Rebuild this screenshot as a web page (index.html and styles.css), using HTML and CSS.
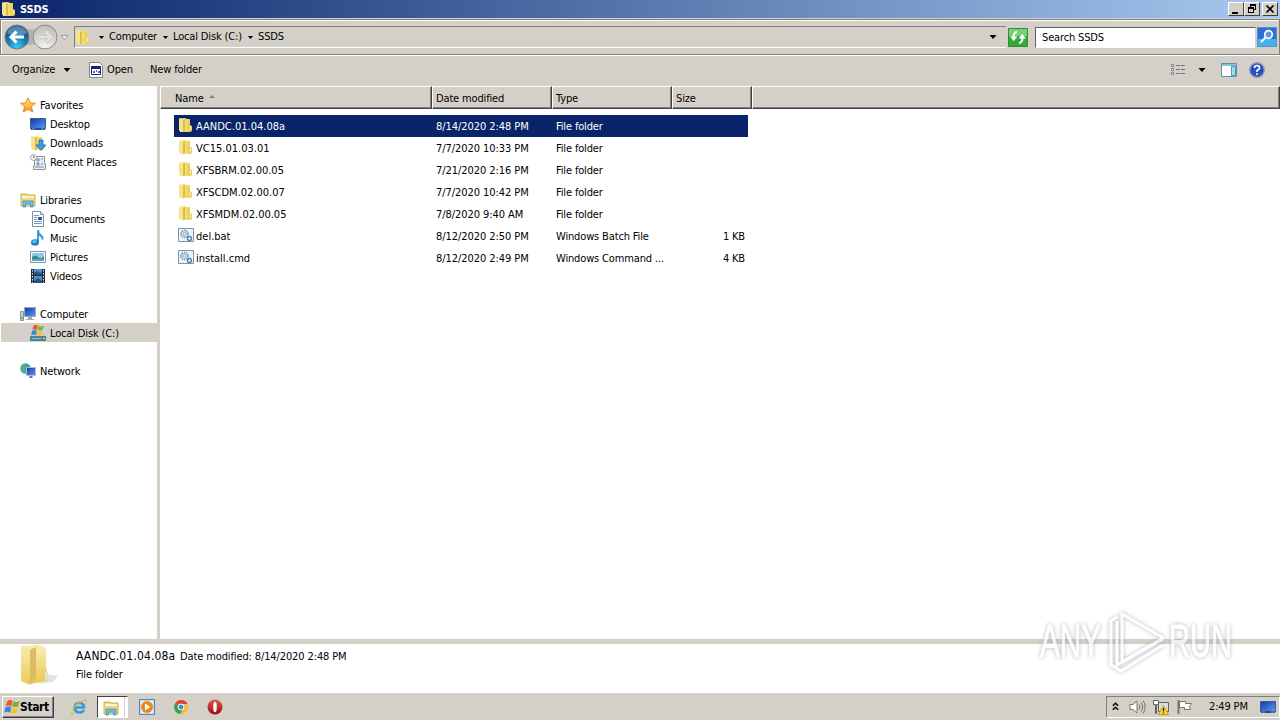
FILE: index.html
```html
<!DOCTYPE html>
<html lang="en">
<head>
    <meta charset="UTF-8">
    <meta name="viewport" content="width=device-width, initial-scale=1.0">
    <title>SSDS</title>
    <link rel="stylesheet" href="styles.css">
</head>
<body>
    <!-- shared icons -->
    <svg class="defs" width="0" height="0">
        <defs>
            <linearGradient id="gold" x1="0" x2="1"><stop offset="0" stop-color="#fbf0a0"/><stop offset="1" stop-color="#e6ca54"/></linearGradient>
            <linearGradient id="goldDown" x1="0" y1="0" x2="0" y2="1"><stop offset="0" stop-color="#f8ecac"/><stop offset="1" stop-color="#ecca58"/></linearGradient>
            <linearGradient id="screen" x1="0" y1="0" x2="1" y2="1"><stop offset="0" stop-color="#1636a8"/><stop offset="1" stop-color="#5a9cf0"/></linearGradient>
            <radialGradient id="blueBall" cx=".5" cy=".9" r=".85"><stop offset="0" stop-color="#3fc8ef"/><stop offset=".5" stop-color="#1878b4"/><stop offset="1" stop-color="#134978"/></radialGradient>
            <radialGradient id="greyBall" cx=".5" cy=".9" r=".9"><stop offset="0" stop-color="#f4f3f1"/><stop offset="1" stop-color="#bdbab5"/></radialGradient>
            <linearGradient id="starFill" x1="0" y1="0" x2="0" y2="1"><stop offset="0" stop-color="#fff07a"/><stop offset="1" stop-color="#f8961e"/></linearGradient>
            <linearGradient id="redBall" x1="0" y1="0" x2="0" y2="1"><stop offset="0" stop-color="#e8584a"/><stop offset="1" stop-color="#9c0810"/></linearGradient>
        </defs>
        <symbol id="folder" viewBox="1 0 16 16">
            <path d="M2 1.500l6-.5 2 1h3v6l2 1v5l-2 1H3z" fill="url(#gold)"/>
            <path d="M2 1.500l4 1.500v12l-4-1.500z" fill="#f6e48c"/>
            <path d="M6 3l2-1v12l-2 1.500z" fill="#dcbc48"/>
            <path d="M8 2h2v12H8z" fill="#f4dd70"/>
            <path d="M10.500 2H13v11h-2.500z" fill="#ecd25c"/>
            <path d="M13 9.500h1v3h-1z" fill="#fff8d0"/>
        </symbol>
        <symbol id="library" viewBox="0 0 16 16">
            <path d="M1 2h6l1 1h7v11H1z" fill="#f0d878" stroke="#cfb050"/>
            <path d="M2 5h12" stroke="#fff7c4" stroke-width="2"/>
            <path d="M3 15V9h10v6h-2.500v-3h-5v3z" fill="#6cc0e8" stroke="#3c90bc" stroke-width=".8"/>
        </symbol>
        <symbol id="script" viewBox="0 0 16 16">
            <path d="M.5 1.500h15v13H.5z" fill="#edf4f9" stroke="#7d93a6"/>
            <circle cx="6.500" cy="7" r="3.500" fill="none" stroke="#668fae" stroke-width="1.500" stroke-dasharray="1.500 .7"/>
            <circle cx="6.500" cy="7" r="1.500" fill="none" stroke="#7fa2bd"/>
            <circle cx="11.500" cy="11.500" r="2" fill="#fff" stroke="#4f7ca0" stroke-width="1.300"/>
        </symbol>
        <symbol id="flag" viewBox="1 0 15 15">
            <path d="M4 2q3-2 5 0L8 7Q5 5 2.500 7z" fill="#ee5a24"/>
            <path d="M9.800 2.400q3 1 6-.5l-1.500 5q-3 1-5.500 0z" fill="#74b62c"/>
            <path d="M2.300 8q3-2 5.500 0l-1.200 5q-3-2-5.500 0z" fill="#3787dc"/>
            <path d="M8.600 8.200q3 1 5.500 0l-1.400 5q-3 1-5.300 0z" fill="#f8c424"/>
        </symbol>
        <symbol id="monitor" viewBox="0 0 16 16">
            <path d="M.5 2.500h15v10H.5z" fill="url(#screen)" stroke="#3b5c9c"/>
            <path d="M1 12h14v2H1z" fill="#28488c"/>
            <path d="M2 13h3M11 13h3" stroke="#7c9cd0"/>
        </symbol>
        <symbol id="down" viewBox="0 0 7 4"><path d="M0 0h7L3.500 4z" fill="#000"/></symbol>
    </svg>

    <div class="window">
        <div class="titlebar">
            <svg class="icon"><use href="#folder"/></svg>
            <span class="title">SSDS</span>
            <div class="buttons">
                <svg class="winbtn" viewBox="0 0 14 12"><path d="M3 9h6v2H3z"/></svg>
                <svg class="winbtn" viewBox="0 0 14 12"><path d="M5 1h6v6H9V6h1V3H6v1H5zM3 4h6v6H3zm1 2v3h4V6z" fill-rule="evenodd"/></svg>
                <svg class="winbtn close" viewBox="0 0 14 12"><path d="M3.500 2.500l7 7M10.500 2.500l-7 7" stroke="#000" stroke-width="1.700"/></svg>
            </div>
        </div>

        <div class="navbar">
            <svg class="history" width="66" height="28" viewBox="0 0 66 28">
                <path d="M16 4q15 5 30 0v20q-15-5-30 0z" fill="#b4b2ae"/>
                <circle cx="15" cy="14" r="12" fill="url(#blueBall)" stroke="#6e8294"/>
                <path d="M5 10a10.500 10 0 0 1 20 0q-10 5-20 0z" fill="#fff" opacity=".28"/>
                <path d="M22 14H10M14.500 8.500L9 14l5.500 5.500" fill="none" stroke="#fff" stroke-width="3"/>
                <circle cx="43" cy="14" r="12" fill="url(#greyBall)" stroke="#8d8c89"/>
                <path d="M36 14h12M43.500 8.500L49 14l-5.500 5.500" fill="none" stroke="#c6c3be" stroke-width="4"/>
                <path d="M36 14h12M43.500 8.500L49 14l-5.500 5.500" fill="none" stroke="#e4e2de" stroke-width="2.500"/>
                <path d="M59 12.500h7l-3.500 4z" fill="#eee" stroke="#8c8984" stroke-width=".8"/>
            </svg>
            <div class="address">
                <svg class="icon"><use href="#folder"/></svg>
                <svg class="crumb-arrow first"><use href="#down"/></svg>
                <span class="crumb computer">Computer</span>
                <svg class="crumb-arrow"><use href="#down"/></svg>
                <span class="crumb disk">Local Disk (C:)</span>
                <svg class="crumb-arrow"><use href="#down"/></svg>
                <span class="crumb">SSDS</span>
                <svg class="drop"><use href="#down"/></svg>
            </div>
            <svg class="refresh" width="20" height="19" viewBox="0 0 20 19">
                <path d="M.5.500h19v18H.5z" fill="#35a83c" stroke="#348a38"/>
                <path d="M1 1h18v7H1z" fill="#78cf74"/>
                <path d="M9 4q-3.500 0-3.500 6M11 15q3.500 0 3.500-6" fill="none" stroke="#fff" stroke-width="2"/>
                <path d="M2 8.500h7.500L5.700 13zM10.500 10.500H18L14.300 6z" fill="#fff"/>
            </svg>
            <div class="search">Search SSDS</div>
            <svg class="find" width="20" height="20" viewBox="0 0 20 20">
                <path d="M.5.500h19v19H.5z" fill="#2f6fd4" stroke="#5b8ccc"/>
                <path d="M1 12h18v7H1z" fill="#40b4ee"/>
                <circle cx="11.500" cy="7.500" r="3.800" fill="#5a96e4" stroke="#fff" stroke-width="1.700"/>
                <path d="M8.500 10.500L4 15" stroke="#fff" stroke-width="2.200"/>
            </svg>
        </div>

        <div class="toolbar">
            <span class="organize">Organize</span>
            <svg class="tool-arrow"><use href="#down"/></svg>
            <svg class="open-icon" width="14" height="16" viewBox="0 0 14 16">
                <path d="M.5.500h10l3 3v12H.5z" fill="#fff" stroke="#7c8790"/>
                <path d="M2.500 4.500h9v8h-9z" fill="#fff" stroke="#18246c"/>
                <path d="M2 4h10v3H2z" fill="#18246c"/>
                <path d="M4 9h2v2H4zM7 8h1v2H7zM9 9h2v2H9z" fill="#4a68a8"/>
            </svg>
            <span class="open">Open</span>
            <span class="new-folder">New folder</span>
            <div class="view-tools">
                <svg width="16" height="14" viewBox="0 0 16 14">
                    <path d="M1.500 1.500h2v2h-2zM1.500 5.500h2v2h-2zM1.500 9.500h2v2h-2z" fill="#fff" stroke="#7d8087"/>
                    <path d="M6 2.500h4m1 0h4M6 6.500h4m1 0h4M6 10.500h4m1 0h4" stroke="#6d7681"/>
                </svg>
                <svg class="view-arrow"><use href="#down"/></svg>
                <svg class="pane-icon" width="16" height="14" viewBox="0 0 16 14">
                    <path d="M.5.500h15v13H.5z" fill="#fff" stroke="#5292b8"/>
                    <path d="M1 1h14v2H1z" fill="#7fc2e2"/>
                    <path d="M10.500 3.500h4v9h-4z" fill="#a4dbf2" stroke="#5292b8"/>
                </svg>
                <svg class="help-icon" width="16" height="16" viewBox="0 0 16 16">
                    <circle cx="8" cy="8" r="7.300" fill="#2b50b8" stroke="#8a9cc4" stroke-width="1.400"/>
                    <path d="M5.500 6q0-2.500 2.500-2.500T10.500 6Q10.500 7.200 8 8.500V10M8 11.300v1.700" fill="none" stroke="#fff" stroke-width="1.700"/>
                </svg>
            </div>
        </div>

        <div class="main">
            <div class="sidebar">
                <div class="side root">
                    <svg class="icon" viewBox="0 0 16 16"><path d="M8 .8l2.200 5 5.200.5-4 3.500 1.300 5.200L8 12.200 3.300 15l1.300-5.200-4-3.500 5.200-.5z" fill="url(#starFill)" stroke="#e08a24"/></svg>
                    <span>Favorites</span>
                </div>
                <div class="side"><svg class="icon"><use href="#monitor"/></svg><span>Desktop</span></div>
                <div class="side">
                    <svg class="icon" viewBox="0 0 16 16"><use href="#folder" width="16" height="16"/><path d="M9 5h4v5h3l-5 5.500L6 10h3z" fill="#3f9be4" stroke="#1e68b0" stroke-width=".8"/></svg>
                    <span>Downloads</span>
                </div>
                <div class="side">
                    <svg class="icon" viewBox="0 0 16 16">
                        <path d="M4.500 2.500h10V10h1v5.500H3.500V12h1z" fill="#e8eef2" stroke="#8a98a4"/>
                        <path d="M7 5h2v2H7zM11 5h2M7 9h2v2H7zM11 10h2M5 13h9" fill="none" stroke="#6a90b0"/>
                        <circle cx="3.500" cy="3.500" r="3" fill="#f8fafb" stroke="#97a3ab"/><path d="M3.500 1.500v2H5" fill="none" stroke="#667" stroke-width=".8"/>
                    </svg>
                    <span>Recent Places</span>
                </div>

                <div class="side root gap"><svg class="icon"><use href="#library"/></svg><span>Libraries</span></div>
                <div class="side">
                    <svg class="icon" viewBox="0 0 16 16">
                        <path d="M2.500.500h8l3 3v12h-11z" fill="#fff" stroke="#7a93ab"/>
                        <path d="M10.500.500v3h3" fill="#d4e2ee" stroke="#7a93ab"/>
                        <path d="M4 4.500h5M4 6.500h3M4 8.500h3M4 10.500h8M4 12.500h8" stroke="#789cc4"/><path d="M8 6h4v3H8z" fill="#345a90"/>
                    </svg>
                    <span>Documents</span>
                </div>
                <div class="side">
                    <svg class="icon" viewBox="0 0 16 16"><path d="M7 0h2q0 3 3 5 3 3 0 6 0-4-3-5v7H7z" fill="#3aa0d8"/><ellipse cx="5" cy="12.500" rx="4" ry="3.200" fill="#2480cc"/><ellipse cx="4.500" cy="11.500" rx="2" ry="1.200" fill="#72c8f4"/></svg>
                    <span>Music</span>
                </div>
                <div class="side">
                    <svg class="icon" viewBox="0 0 16 16"><path d="M.5 2.500h15v11H.5z" fill="#fff" stroke="#8095a8"/><path d="M2 4h12v8H2z" fill="#8accf0"/><path d="M2 8q3-3 6 0t6-1v5H2z" fill="#3b8a80"/><path d="M2 10h12v2H2z" fill="#58a8c8"/></svg>
                    <span>Pictures</span>
                </div>
                <div class="side">
                    <svg class="icon" viewBox="0 0 16 16"><path d="M1 1h14v14H1z" fill="#252c38"/><path d="M4 1h8v6H4zM4 8h8v7H4z" fill="#4c90cc"/><path d="M4 5l3-2 3 2 2-1v3H4zM4 13l4-3 4 3v2H4z" fill="#245284"/><path d="M2.500 2v13M13.500 2v13" stroke="#dce4ec" stroke-dasharray="1.500 1.500"/></svg>
                    <span>Videos</span>
                </div>

                <div class="side root gap">
                    <svg class="icon" viewBox="0 0 16 16"><path d="M.5 5.500h3v9h-3z" fill="#c8d0d4" stroke="#8a9498"/><path d="M1 11h2v2H1z" fill="#66b848"/><path d="M4.500 1.500h11v9h-11z" fill="url(#screen)" stroke="#a0a8b8"/><path d="M8 11h4v2h2v1H6v-1h2z" fill="#a2acb8"/></svg>
                    <span>Computer</span>
                </div>
                <div class="side current">
                    <svg class="icon" viewBox="0 0 16 16"><path d="M2 8h12l2 3v3H0v-3z" fill="#c4ccd0"/><path d="M0 11h16v5H0z" fill="#4c8494"/><path d="M2 13.500h9" stroke="#90bcc4"/><path d="M13 13h2v1h-2z" fill="#a8ec70"/><use href="#flag" width="13" height="13" x="1" y="-1"/></svg>
                    <span>Local Disk (C:)</span>
                </div>

                <div class="side root gap">
                    <svg class="icon" viewBox="0 0 16 16"><circle cx="5.500" cy="5.500" r="5.200" fill="#3298d0"/><path d="M2 2q4-2 5 0L4 6l2 3-3 1Q0 6 2 2z" fill="#56b85c"/><path d="M6.500 4.500h9v8h-9z" fill="url(#screen)" stroke="#b0bccc"/><path d="M9.500 13h3v2h-3z" fill="#5478b0"/></svg>
                    <span>Network</span>
                </div>
            </div>

            <div class="files">
                <div class="columns">
                    <div class="col name">Name <i class="sort"></i></div>
                    <div class="col date">Date modified</div>
                    <div class="col type">Type</div>
                    <div class="col size">Size</div>
                    <div class="col rest"></div>
                </div>
                <div class="rows">
                    <div class="row selected"><svg class="icon"><use href="#folder"/></svg><span class="f-name">AANDC.01.04.08a</span><span class="f-date">8/14/2020 2:48 PM</span><span class="f-type">File folder</span><span class="f-size"></span></div>
                    <div class="row"><svg class="icon"><use href="#folder"/></svg><span class="f-name">VC15.01.03.01</span><span class="f-date">7/7/2020 10:33 PM</span><span class="f-type">File folder</span><span class="f-size"></span></div>
                    <div class="row"><svg class="icon"><use href="#folder"/></svg><span class="f-name">XFSBRM.02.00.05</span><span class="f-date">7/21/2020 2:16 PM</span><span class="f-type">File folder</span><span class="f-size"></span></div>
                    <div class="row"><svg class="icon"><use href="#folder"/></svg><span class="f-name">XFSCDM.02.00.07</span><span class="f-date">7/7/2020 10:42 PM</span><span class="f-type">File folder</span><span class="f-size"></span></div>
                    <div class="row"><svg class="icon"><use href="#folder"/></svg><span class="f-name">XFSMDM.02.00.05</span><span class="f-date">7/8/2020 9:40 AM</span><span class="f-type">File folder</span><span class="f-size"></span></div>
                    <div class="row"><svg class="icon"><use href="#script"/></svg><span class="f-name">del.bat</span><span class="f-date">8/12/2020 2:50 PM</span><span class="f-type">Windows Batch File</span><span class="f-size">1 KB</span></div>
                    <div class="row"><svg class="icon"><use href="#script"/></svg><span class="f-name">install.cmd</span><span class="f-date">8/12/2020 2:49 PM</span><span class="f-type">Windows Command ...</span><span class="f-size">4 KB</span></div>
                </div>
            </div>
        </div>

        <div class="details">
            <svg class="big-folder" width="42" height="44" viewBox="0 0 42 44">
                <path d="M26 30l12 2-5 6-14 2z" fill="#d7d7d3" opacity=".7"/>
                <path d="M1 2l18-1 7 3v20l1 1v12l-16 3z" fill="url(#goldDown)"/>
                <path d="M1 2l9 4v35L1 37z" fill="url(#goldDown)"/>
                <path d="M10 6l6-3v31l-6 7z" fill="#dcbc60"/>
                <path d="M16 3l10 1v33l-10-1z" fill="url(#goldDown)"/>
                <path d="M25 27l2 1v8l-2 1z" fill="#f8f5da" stroke="#c8bc84" stroke-width=".6"/>
            </svg>
            <div class="info">
                <div><span class="d-name">AANDC.01.04.08a</span><span class="d-date">Date modified: 8/14/2020 2:48 PM</span></div>
                <div class="d-type">File folder</div>
            </div>
        </div>
    </div>

    <div class="taskbar">
        <div class="start"><svg class="icon"><use href="#flag"/></svg><b>Start</b></div>
        <svg class="task ie" viewBox="0 0 16 16"><path d="M3.500 8.500h9.500Q13 4 8.500 4T3.500 8.500Q4 13.500 8.500 13.500q3 0 4.500-2.500" fill="none" stroke="#2f9cdc" stroke-width="2.600"/><path d="M3 14.500Q0 16 1 12 4 5 12 1.500q4-1.500 3 2" fill="none" stroke="#e8b830" stroke-width="1.200"/></svg>
        <div class="task-open"><svg class="icon"><use href="#library"/></svg></div>
        <svg class="task media" viewBox="0 0 16 16"><path d="M.5.500h15v15H.5z" fill="#b8dcf4" stroke="#4a88c0"/><path d="M2 2h12v12H2z" fill="#eaf3f8"/><circle cx="8" cy="8" r="6" fill="#f28418"/><path d="M6 4.500L11.500 8 6 11.500z" fill="#fff"/></svg>
        <svg class="task chrome" viewBox="0 0 16 16"><circle cx="8" cy="8" r="7" fill="#f0c030"/><path d="M8 8L2 4.500A7 7 0 0 1 14.500 5H8z" fill="#dc4434"/><path d="M8 8L2 4.500A7 7 0 0 0 7 15l3-5z" fill="#38a052"/><circle cx="8" cy="8" r="3" fill="#4688e8" stroke="#fff"/></svg>
        <svg class="task opera" viewBox="0 0 16 16"><circle cx="8" cy="8" r="7.500" fill="url(#redBall)"/><ellipse cx="8" cy="8" rx="1.800" ry="5.300" fill="#fff"/></svg>

        <div class="tray">
            <svg class="chevrons" width="7" height="9" viewBox="0 0 7 9"><path d="M.8 3.800l2.700-2.600 2.700 2.600M.8 7.800l2.700-2.600 2.700 2.600" fill="none" stroke="#000" stroke-width="1.400"/></svg>
            <svg class="sound" width="17" height="16" viewBox="0 0 17 16"><path d="M1 5.500h3L8 2v12l-4-3.500H1z" fill="#fff" stroke="#77736d"/><path d="M10 5.500q2 2.500 0 5M12 3.500q3.500 4.500 0 9M14 1.500q4.500 6.500 0 13" fill="none" stroke="#77736d"/></svg>
            <svg class="net" width="16" height="16" viewBox="0 0 16 16"><path d="M5.500 3.500h10v9h-10z" fill="#d8dbdc" stroke="#606468"/><path d="M.5 1.500h5v4h-2v9h-1v-9h-2z" fill="#fff" stroke="#606468"/><path d="M10.500 6.500l5 9h-10z" fill="#ffdc20" stroke="#c89c10"/><path d="M10.500 9v3.500m0 1v1" stroke="#222" stroke-width="1.300"/></svg>
            <svg class="action" width="16" height="16" viewBox="0 0 16 16"><path d="M1.500 1v14" stroke="#77736d" stroke-width="2"/><path d="M2.500 2.500h6v2h6l-2 3 1 3h-6v-2h-5z" fill="#fff" stroke="#77736d"/></svg>
            <span class="clock">2:49 PM</span>
            <svg class="icon show-desktop"><use href="#monitor"/></svg>
        </div>
    </div>

    <svg class="watermark" width="210" height="72" viewBox="0 0 210 72">
        <text x="4" y="53" textLength="61" lengthAdjust="spacingAndGlyphs">ANY</text>
        <path d="M86 10l41 24-41 24zM81 13l-6 4v44l10 6 42-26M81 17v44l46-26"/>
        <text x="133" y="53" textLength="63" lengthAdjust="spacingAndGlyphs">RUN</text>
    </svg>
</body>
</html>
```
FILE: styles.css
```css
* {
    box-sizing: border-box;
}
body {
    margin: 0;
    width: 1280px;
    height: 720px;
    overflow: hidden;
    background-color: #d4d0c8;
    font-family: "DejaVu Sans Condensed", Tahoma, sans-serif;
    font-size: 11px;
    line-height: 14px;
    letter-spacing: -0.15px;
    color: #000;
    white-space: nowrap;
    display: flex;
    flex-direction: column;
}
svg {
    display: block;
    flex: none;
}
.defs {
    position: absolute;
}
.icon {
    width: 16px;
    height: 16px;
}
.window {
    height: 692px;
    display: flex;
    flex-direction: column;
}
.titlebar {
    height: 18px;
    display: flex;
    align-items: center;
    padding: 0 2px 0 1px;
    background: linear-gradient(to right, #0a246a, #a6caf0);
}
.title {
    margin-left: 3px;
    padding-top: 1px;
    color: #fff;
    font-weight: bold;
}
.buttons {
    display: flex;
    margin-left: auto;
}
.winbtn {
    width: 16px;
    height: 14px;
    background-color: #d4d0c8;
    border: 1px solid;
    border-color: #fff #404040 #404040 #fff;
}
.close {
    margin-left: 2px;
}
.navbar {
    height: 36px;
    display: flex;
    align-items: center;
    margin-top: 1px;
    padding: 0 1px;
    border: 1px solid #808080;
    box-shadow: inset 1px 1px #fff, 0 1px #fff;
}
.address {
    width: 932px;
    height: 22px;
    display: flex;
    align-items: center;
    margin-left: 6px;
    border-top: 1px solid #808080;
    border-left: 1px solid #808080;
    border-bottom: 1px solid #fff;
}
.crumb-arrow {
    width: 5px;
    height: 3px;
    margin-right: 5px;
}
.first {
    margin-left: 8px;
}
.computer {
    width: 54px;
}
.disk {
    width: 75px;
}
.drop {
    width: 8px;
    height: 4px;
    margin-left: auto;
    margin-right: 9px;
}
.refresh {
    margin-left: 2px;
}
.search {
    width: 221px;
    height: 21px;
    margin-left: 7px;
    padding: 3px 6px;
    background-color: #fff;
    border: 1px solid;
    border-color: #606060 #d4d0c8 #fff #606060;
}
.find {
    margin-left: 1px;
}
.toolbar {
    height: 31px;
    display: flex;
    align-items: center;
    padding: 0 15px 1px 12px;
}
.organize {
    width: 51px;
}
.tool-arrow {
    width: 8px;
    height: 4px;
}
.open-icon {
    margin-left: 18px;
}
.open {
    width: 43px;
    margin-left: 4px;
}
.view-tools {
    display: flex;
    align-items: center;
    margin-left: auto;
}
.view-arrow {
    width: 8px;
    height: 4px;
    margin-left: 12px;
}
.pane-icon {
    margin-left: 15px;
}
.help-icon {
    margin-left: 12px;
}
.main {
    height: 553px;
    display: flex;
    background-color: #fff;
}
.sidebar {
    width: 160px;
    padding: 9px 0 0 1px;
    border-right: 3px solid #d4d0c8;
}
.side {
    height: 19px;
    display: flex;
    align-items: center;
    gap: 4px;
    padding-left: 29px;
}
.side span {
    padding-top: 2px;
}
.root {
    padding-left: 19px;
}
.gap {
    margin-top: 19px;
}
.current {
    background-color: #d4d0c8;
}
.files {
    flex: 1;
}
.columns {
    height: 23px;
    display: flex;
    background-color: #d4d0c8;
}
.col {
    padding: 5px 3px 0;
    border: 1px solid;
    border-color: #fff #404040 #404040 #fff;
    box-shadow: inset -1px -1px #808080;
}
.name {
    width: 272px;
    padding-left: 14px;
}
.sort {
    display: inline-block;
    margin: 0 0 4px 2px;
    border: 3px solid transparent;
    border-top: 0;
    border-bottom-color: #808080;
}
.date {
    width: 120px;
}
.type {
    width: 120px;
}
.size {
    width: 80px;
}
.rest {
    flex: 1;
}
.rows {
    width: 574px;
    margin: 6px 0 0 14px;
}
.row {
    height: 22px;
    display: flex;
    align-items: center;
    padding-left: 4px;
}
.row .icon {
    margin-bottom: 2px;
}
.row span {
    padding-top: 2px;
}
.selected {
    background-color: #0a246a;
    color: #fff;
}
.f-name {
    width: 240px;
    margin-left: 2px;
    letter-spacing: 0;
}
.f-date {
    width: 120px;
    letter-spacing: -0.06px;
}
.f-type {
    width: 120px;
}
.f-size {
    width: 69px;
    text-align: right;
}
.details {
    height: 53px;
    display: flex;
    background-color: #fff;
    border-top: 5px solid #d4d0c8;
    padding-left: 20px;
}
.info {
    margin-left: 14px;
    padding-top: 3px;
    line-height: 18px;
}
.d-name {
    display: inline-block;
    width: 104px;
    font-size: 12px;
    letter-spacing: 0.15px;
}
.d-date {
    letter-spacing: -0.12px;
}
.taskbar {
    height: 28px;
    display: flex;
    align-items: center;
    padding: 0 0 0 2px;
    border-top: 1px solid #fff;
}
.start {
    width: 52px;
    height: 22px;
    display: flex;
    align-items: center;
    padding-left: 1px;
    border: 1px solid;
    border-color: #fff #404040 #404040 #fff;
    box-shadow: inset -1px -1px #808080;
}
.start b {
    font-size: 12px;
    letter-spacing: -0.4px;
}
.task {
    width: 16px;
    height: 16px;
}
.ie {
    margin-left: 17px;
}
.task-open {
    width: 31px;
    height: 22px;
    margin-left: 10px;
    padding: 3px 0 0 5px;
    background-color: #fff;
    border: 1px solid;
    border-color: #404040 #fff #fff #404040;
    box-shadow: inset -2px 0 #fff, inset -3px 0 #d4d0c8;
}
.media {
    margin-left: 11px;
}
.chrome {
    margin-left: 18px;
}
.opera {
    margin-left: 18px;
}
.tray {
    width: 174px;
    height: 22px;
    display: flex;
    align-items: center;
    margin-left: auto;
    padding-left: 5px;
    border: 1px solid;
    border-color: #808080 #fff #fff #808080;
}
.sound {
    margin-left: 10px;
}
.net {
    margin-left: 7px;
}
.action {
    margin-left: 8px;
}
.clock {
    width: 51px;
    margin-left: 16px;
}
.watermark {
    position: absolute;
    left: 1036px;
    top: 604px;
    fill: #fff;
    font-family: "Liberation Sans", sans-serif;
    font-size: 46px;
    letter-spacing: 0;
    opacity: 0.7;
    filter: drop-shadow(0 0 2px #999);
}
.watermark text {
    stroke: #fff;
    stroke-width: 1px;
}
.watermark path {
    fill: none;
    stroke: #fff;
    stroke-width: 3px;
}
```
